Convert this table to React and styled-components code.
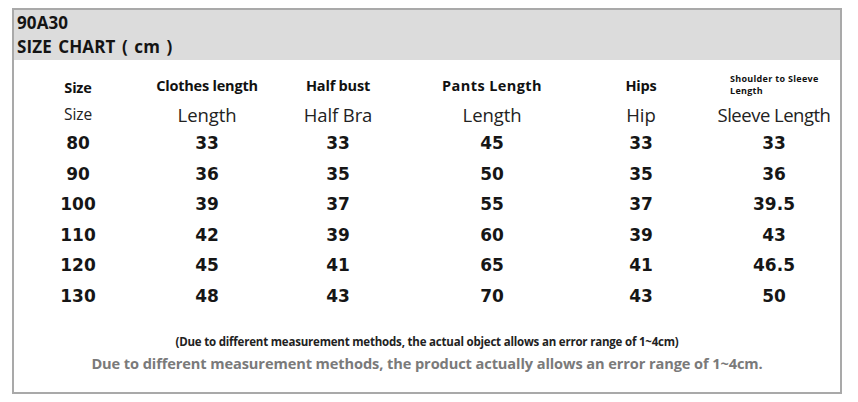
import React from "react";
import styled, { createGlobalStyle } from "styled-components";

const Global = createGlobalStyle`
  html, body { margin: 0; padding: 0; background: #fff; }
  body { font-family: "Open Sans", "Noto Sans", sans-serif; color: #111; }
`;

const Frame = styled.div`
  box-sizing: border-box;
  margin: 8px 0 0 12px;
  width: 830px;
  height: 386px;
  border: 2px solid #a9a9a9;
  display: flex;
  flex-direction: column;
`;

const Banner = styled.div`
  background: #dcdcdc;
  height: 50px;
  padding: 0 0 0 3px;
  font-weight: 700;
  font-size: 17px;
  line-height: 24px;
  color: #141414;
  letter-spacing: 0.1px;
  word-spacing: 2px;
  display: flex;
  flex-direction: column;
  justify-content: center;
`;

const Table = styled.div`
  display: grid;
  grid-template-columns: 128px 130px 132px 176px 122px 1fr;
  grid-template-rows: 30px 28px repeat(6, 30.5px);
  padding-top: 10px;
  align-items: center;
  justify-items: center;
`;

const Cell = styled.div`
  padding-left: ${(p) => (p.$last ? "6px" : "0")};
  white-space: nowrap;
  text-align: center;
`;

const HeadCell = styled(Cell)`
  font-weight: 700;
  font-size: 14.5px;
  letter-spacing: ${(p) => (p.$wide ? "0.4px" : "-0.2px")};
  padding-top: ${(p) => (p.$drop ? "5px" : "0")};
`;

const TinyHead = styled(Cell)`
  font-weight: 700;
  font-size: 9px;
  line-height: 12px;
  letter-spacing: 0.3px;
  text-align: left;
  padding-left: 28px;
  justify-self: start;
  margin-top: 0;
`;

const SubCell = styled(Cell)`
  font-size: ${(p) => (p.$small ? "15.5px" : "18.5px")};
  color: #222;
  letter-spacing: ${(p) => (p.$last ? "-0.5px" : "-0.1px")};
`;

const NumCell = styled(Cell)`
  font-family: "DejaVu Sans", sans-serif;
  font-weight: 700;
  font-size: 17px;
  color: #161616;
`;

const Notes = styled.div`
  display: flex;
  flex-direction: column;
  align-items: center;
  margin-top: 23px;
`;

const NoteSmall = styled.div`
  font-weight: 700;
  font-size: 11.5px;
  line-height: 16px;
  letter-spacing: -0.2px;
  color: #222;
`;

const NoteBig = styled.div`
  font-weight: 700;
  font-size: 14.6px;
  line-height: 22px;
  color: #7a7a7a;
  letter-spacing: -0.1px;
  margin-top: 2px;
`;

const heads = ["Size", "Clothes length", "Half bust", "Pants Length", "Hips"];
const subs = ["Size", "Length", "Half Bra", "Length", "Hip", "Sleeve Length"];
const rows = [
  ["80", "33", "33", "45", "33", "33"],
  ["90", "36", "35", "50", "35", "36"],
  ["100", "39", "37", "55", "37", "39.5"],
  ["110", "42", "39", "60", "39", "43"],
  ["120", "45", "41", "65", "41", "46.5"],
  ["130", "48", "43", "70", "43", "50"],
];

export default function App() {
  return (
    <>
      <Global />
      <Frame>
        <Banner>
          <div>90A30</div>
          <div>SIZE CHART ( cm )</div>
        </Banner>
        <Table>
          {heads.map((h, i) => (
            <HeadCell key={h} $drop={i === 0} $wide={i === 3}>
              {h}
            </HeadCell>
          ))}
          <TinyHead>
            Shoulder to Sleeve
            <br />
            Length
          </TinyHead>
          {subs.map((s, i) => (
            <SubCell key={i} $small={i === 0} $last={i === 5}>
              {s}
            </SubCell>
          ))}
          {rows.map((r) =>
            r.map((v, i) => (
              <NumCell key={r[0] + "-" + i} $last={i === 5}>
                {v}
              </NumCell>
            ))
          )}
        </Table>
        <Notes>
          <NoteSmall>
            (Due to different measurement methods, the actual object allows an error range of 1~4cm)
          </NoteSmall>
          <NoteBig>
            Due to different measurement methods, the product actually allows an error range of 1~4cm.
          </NoteBig>
        </Notes>
      </Frame>
    </>
  );
}
